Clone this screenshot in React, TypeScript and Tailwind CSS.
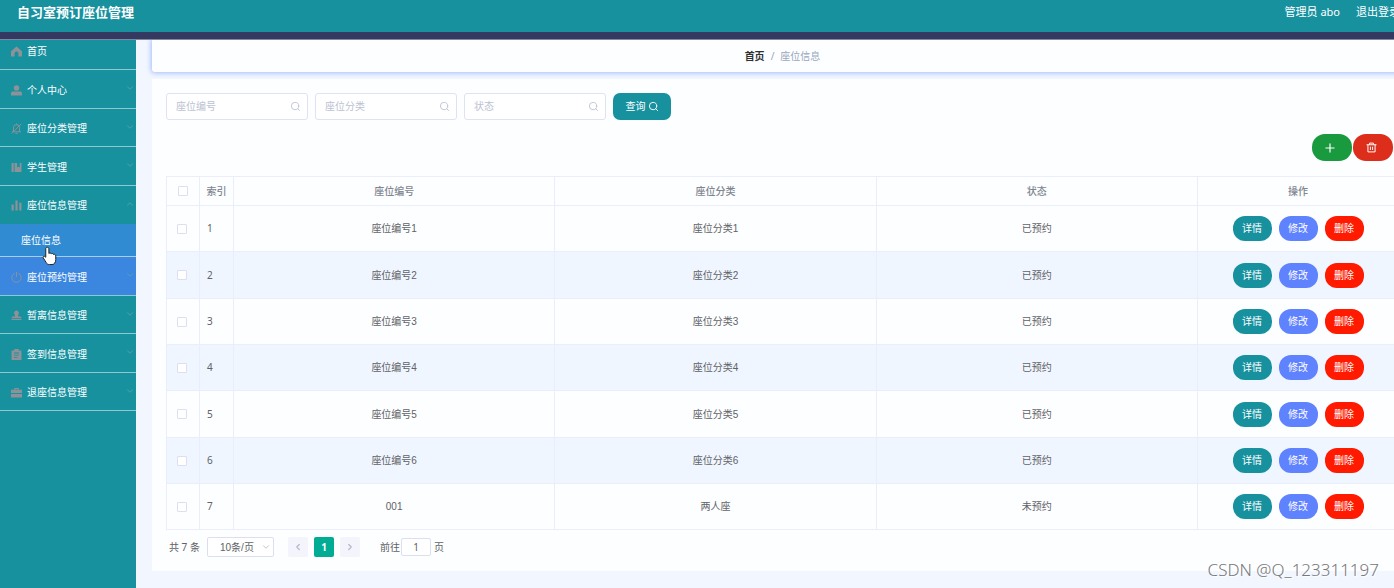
import React from 'react';
import { ChevronDown, ChevronLeft, ChevronRight, ChevronUp, Plus, Search } from 'lucide-react';

interface MenuItem {
  label: string;
  icon: React.ReactNode;
  children?: string[];
  hovered?: boolean;
}

interface Seat {
  id: number;
  code: string;
  category: string;
  status: string;
}

const Icon = ({ children }: { children: React.ReactNode }) => (
  <svg viewBox="0 0 20 20" className="size-[11px] shrink-0 text-[#8c9297]" fill="currentColor" aria-hidden="true">
    {children}
  </svg>
);

const MENU: MenuItem[] = [
  { label: '首页', icon: <Icon><path d="M10 1 0 9.500V19h6.500v-5.500a3.500 3.500 0 0 1 7 0V19H20V9.500z" /></Icon> },
  { label: '个人中心', icon: <Icon><circle cx="10" cy="5.500" r="5" /><path d="M0 19v-3.500C0 13 1.500 12 4 12h12c2.500 0 4 1 4 3.500V19z" /></Icon> },
  {
    label: '座位分类管理',
    icon: (
      <Icon>
        <path d="M2 16h16M4.500 16V9a5.500 5.500 0 0 1 11-1v8M8 19h4M10 1v3M1.500 19 18.500 1.500" fill="none" stroke="currentColor" strokeWidth="1.800" />
      </Icon>
    ),
  },
  { label: '学生管理', icon: <Icon><path d="M1 2h4v16H1zM6.500 2H11v8l2.500-2 2.500 2V2h3v16H6.500z" /></Icon> },
  { label: '座位信息管理', icon: <Icon><path d="M1 8h4v11H1zM8 1h4v18H8zM15 5h4v14h-4z" /></Icon>, children: ['座位信息'] },
  {
    label: '座位预约管理',
    icon: (
      <Icon>
        <path d="M6.500 2.500a8.500 8.500 0 1 0 7 0M10 0v9" fill="none" stroke="currentColor" strokeWidth="1.800" />
      </Icon>
    ),
    hovered: true,
  },
  { label: '暂离信息管理', icon: <Icon><path d="M10 1a4.500 4.500 0 0 0-3 7.800V12H4c-2 0-3 1-3 3h18c0-2-1-3-3-3h-3V8.800A4.500 4.500 0 0 0 10 1zM1 16.500h18V18H1z" /></Icon> },
  { label: '签到信息管理', icon: <Icon><path fillRule="evenodd" d="M1 2.500h5V0h8v2.500h5V20H1zM5.500 8h9V6.500h-9zm0 4h9v-1.500h-9zm0 4h6v-1.500h-6z" /></Icon> },
  { label: '退座信息管理', icon: <Icon><path fillRule="evenodd" d="M6 5V2h8v3h6v6H0V5zm2 0h4V3.500H8zM0 12.500h20V19H0z" /></Icon> },
];

const SEATS: Seat[] = [
  ...[1, 2, 3, 4, 5, 6].map((n) => ({ id: n, code: `座位编号${n}`, category: `座位分类${n}`, status: '已预约' })),
  { id: 7, code: '001', category: '两人座', status: '未预约' },
];

const FILTERS = ['座位编号', '座位分类', '状态'];

const TrashIcon = () => (
  <svg viewBox="0 0 20 20" className="size-[11px]" fill="none" stroke="currentColor" strokeWidth="1.800" aria-hidden="true">
    <path d="M1 5h18M6.500 5V2h7v3M3.500 5v13h13V5M8 8.500v6M12 8.500v6" />
  </svg>
);

const HandCursor = () => (
  <svg viewBox="0 0 24 32" className="pointer-events-none absolute left-[42px] top-[22px] z-10 h-[20px] w-[15px]" aria-hidden="true">
    <path
      d="M8.500 2c1.600 0 2.500 1 2.500 2.500V12c.6-1.200 3.400-1.100 3.800.5.900-1 3.300-.7 3.600 1 1.400-.7 3.600 0 3.600 2.200v6c0 4-2 8-6 8h-4c-3 0-4.500-1.500-5.500-3.500L2 19c-1-1.800 1-3.500 2.500-2.200L6 18V4.500C6 3 7 2 8.500 2z"
      fill="#fff"
      stroke="#222"
      strokeWidth="1.600"
      strokeLinejoin="round"
    />
  </svg>
);

const Checkbox = ({ label }: { label: string }) => (
  <input
    type="checkbox"
    aria-label={label}
    className="block size-[10px] appearance-none rounded-[1px] border border-[#dcdff0] bg-white checked:bg-[#18919f]"
  />
);

const Header = () => (
  <header className="flex h-8 items-center justify-between bg-[#18919f] pb-[7px] pl-[17px] pr-[13px] text-white">
    <h1 className="text-[13px] font-bold">自习室预订座位管理</h1>
    <div className="flex gap-4 text-[11px]">
      <span>管理员 abo</span>
      <a href="#logout">退出登录</a>
    </div>
  </header>
);

const Sidebar = () => (
  <aside className="w-[136px] shrink-0 bg-[#18919f]">
    <ul className="text-[10px] text-white">
      {MENU.map((item, index) => (
        <li key={item.label} className="group">
          <a
            href="#menu"
            className={`flex items-center gap-[5px] border-b border-[#8fc9d0] pl-[11px] pr-px ${
              index === 0 ? 'h-[30px] pb-[6px]' : 'h-[38px] pt-[2px] group-even:h-[39px]'
            } ${item.hovered ? 'bg-[#3b87e0]' : ''} ${item.children ? 'border-b-transparent' : ''}`}
          >
            {item.icon}
            <span className="grow">{item.label}</span>
            {index > 0 &&
              (item.children ? (
                <ChevronUp className="mb-1 size-[10px] text-[#5fa0ac]" strokeWidth={2} />
              ) : (
                <ChevronDown className="mb-1 size-[10px] text-[#5fa0ac]" strokeWidth={2} />
              ))}
          </a>
          {item.children?.map((child) => (
            <div key={child} className="relative">
              <a href="#seats" className="flex h-[33px] items-center border-b border-[#a5cdee] bg-[#318bd2] pl-[21px]">
                {child}
              </a>
              <HandCursor />
            </div>
          ))}
        </li>
      ))}
    </ul>
  </aside>
);

const SearchBar = () => (
  <form className="flex gap-[7px]" onSubmit={(e) => e.preventDefault()}>
    {FILTERS.map((name) => (
      <label key={name} className="flex h-[27px] w-[142px] items-center rounded-[3px] border border-[#dfe2f2] bg-white pl-[9px] pr-[6px]">
        <input
          type="text"
          placeholder={name}
          aria-label={name}
          className="min-w-0 grow text-[10px] text-[#606266] outline-none placeholder:text-[#bcc2d2]"
        />
        <Search className="size-[11px] shrink-0 text-[#bcc2d8]" strokeWidth={2} />
      </label>
    ))}
    <button type="submit" className="flex h-[27px] w-[58px] items-center justify-center gap-[2px] rounded-[7px] bg-[#18919f] text-[10px] text-white">
      查询
      <Search className="size-[11px]" strokeWidth={2} />
    </button>
  </form>
);

const SeatTable = () => (
  <table className="mt-[15px] w-full table-fixed border-separate border-spacing-0 border-l border-t border-[#ebeefa] text-center text-[10px] text-[#606266] [&_td]:border-b [&_td]:border-r [&_td]:border-[#ebeefa] [&_td]:p-0 [&_th]:border-b [&_th]:border-r [&_th]:border-[#ebeefa] [&_th]:p-0">
    <colgroup>
      <col className="w-[33px]" />
      <col className="w-[34px]" />
      <col />
      <col />
      <col />
      <col className="w-[201px]" />
    </colgroup>
    <thead>
      <tr className="h-[29px] text-[#80858f] [&_th]:font-medium">
        <th>
          <div className="pl-[11px]"><Checkbox label="全选" /></div>
        </th>
        <th>索引</th>
        <th>座位编号</th>
        <th>座位分类</th>
        <th>状态</th>
        <th>操作</th>
      </tr>
    </thead>
    <tbody>
      {SEATS.map((seat) => (
        <tr key={seat.id} className="h-[46px] even:bg-[#f0f6ff] nth-[3n+2]:h-[47px]">
          <td>
            <div className="pl-[10px]"><Checkbox label={`选择第${seat.id}行`} /></div>
          </td>
          <td className="text-left">
            <div className="pl-[7px]">{seat.id}</div>
          </td>
          <td className="font-['Liberation_Sans','Noto_Sans_CJK_SC',sans-serif]">{seat.code}</td>
          <td className="font-['Liberation_Sans','Noto_Sans_CJK_SC',sans-serif]">{seat.category}</td>
          <td>{seat.status}</td>
          <td>
            <div className="flex justify-center gap-[7px] text-white [&>button]:h-[25px] [&>button]:w-[39px] [&>button]:rounded-xl">
              <button type="button" className="bg-[#18919f]">详情</button>
              <button type="button" className="bg-[#5f82ff]">修改</button>
              <button type="button" className="bg-[#ff1a00]">删除</button>
            </div>
          </td>
        </tr>
      ))}
    </tbody>
  </table>
);

const Pagination = () => (
  <nav className="flex h-[34px] items-center pl-[3px] text-[10px] text-[#606266]" aria-label="分页">
    <span className="w-[38px]">共 7 条</span>
    <div className="relative">
      <select
        aria-label="每页条数"
        defaultValue="10"
        className="h-5 w-[67px] appearance-none rounded-[2px] border border-[#dcdff0] bg-white pl-3 font-['Liberation_Sans','Noto_Sans_CJK_SC',sans-serif]"
      >
        <option value="10">10条/页</option>
        <option value="20">20条/页</option>
      </select>
      <ChevronDown className="pointer-events-none absolute right-[3px] top-[5px] size-[10px] text-[#b4bac8]" />
    </div>
    <div className="ml-[14px] flex gap-[6px] [&>button]:flex [&>button]:h-5 [&>button]:w-5 [&>button]:items-center [&>button]:justify-center [&>button]:rounded-[2px]">
      <button type="button" aria-label="上一页" className="bg-[#f4f4fc] text-[#b4bac8]">
        <ChevronLeft className="size-[10px]" strokeWidth={3} />
      </button>
      <button type="button" className="bg-[#00ac94] font-bold text-white">1</button>
      <button type="button" aria-label="下一页" className="bg-[#f4f4fc] text-[#b4bac8]">
        <ChevronRight className="size-[10px]" strokeWidth={3} />
      </button>
    </div>
    <label className="ml-5 flex items-center gap-px">
      前往
      <input
        type="text"
        defaultValue="1"
        className="h-[18px] w-[30px] rounded-[2px] border border-[#dcdff0] bg-white text-center"
      />
      <span className="pl-[2px]">页</span>
    </label>
  </nav>
);

const App: React.FC = () => {
  return (
    <div className="relative min-h-screen overflow-hidden bg-[#f2f6ff] font-['Noto_Sans','Noto_Sans_CJK_SC',sans-serif]">
      {/* the layout is a little wider than the viewport */}
      <div className="-mr-[19px] flex min-h-screen flex-col">
        <Header />
        <div className="relative z-10 h-2 border-b border-[#8288a0] bg-[#333960]" />
        <div className="flex grow">
          <Sidebar />
          <main className="min-w-0 grow pl-4">
            <nav className="flex h-8 items-center justify-center gap-[6px] rounded-b-[3px] bg-[#fdfeff] text-[10px] shadow-[0_0_5px_1px_#a3bbff]" aria-label="面包屑">
              <a href="#home" className="font-bold text-[#303133]">首页</a>
              <span className="text-[#99a3bf]">/</span>
              <span className="text-[#97a8be]">座位信息</span>
            </nav>
            <section className="mt-[7px] bg-[#fdfeff] px-[14px] pb-[7px] pt-[14px]">
              <SearchBar />
              <div className="mt-[14px] flex justify-end gap-px pr-[6px] text-white [&>button]:flex [&>button]:h-[27px] [&>button]:w-10 [&>button]:items-center [&>button]:justify-center [&>button]:rounded-[13px] [&>button]:pr-1">
                <button type="button" aria-label="新增" className="bg-[#199a3f]">
                  <Plus className="size-[14px]" strokeWidth={2} />
                </button>
                <button type="button" aria-label="批量删除" className="bg-[#dc2e1b]">
                  <TrashIcon />
                </button>
              </div>
              <SeatTable />
              <Pagination />
            </section>
          </main>
        </div>
      </div>
      <div className="absolute bottom-[6px] right-[15px] text-[17px] font-light text-[#777] [text-shadow:1px_1px_0_#fff]">
        CSDN @Q_123311197
      </div>
    </div>
  );
};

export default App;
